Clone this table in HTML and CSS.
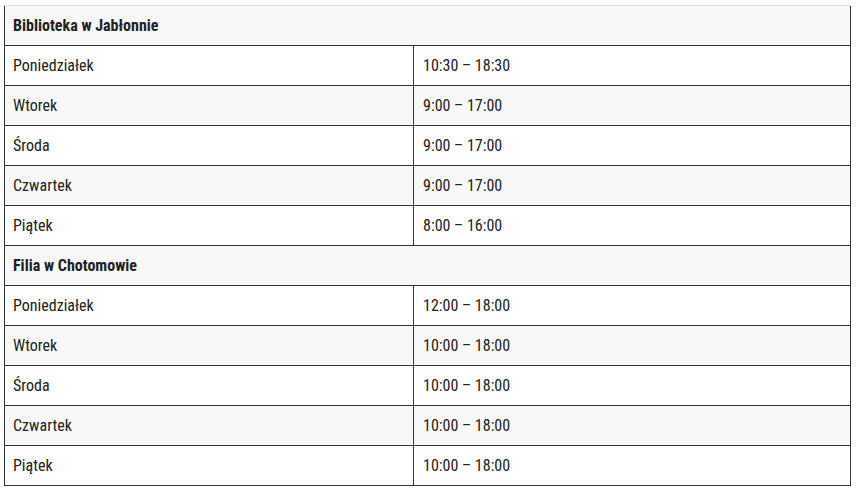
FILE: index.html
```
<!DOCTYPE html>
<html lang="pl">
<head>
<meta charset="utf-8">
<title>Godziny otwarcia</title>
<link rel="stylesheet" href="styles.css">
</head>
<body>
<div class="wrap">
<table class="hours">
<tbody>
<tr class="head"><th colspan="2">Biblioteka w Jabłonnie</th></tr>
<tr><td class="day">Poniedziałek</td><td>10:30 – 18:30</td></tr>
<tr><td class="day">Wtorek</td><td>9:00 – 17:00</td></tr>
<tr><td class="day">Środa</td><td>9:00 – 17:00</td></tr>
<tr><td class="day">Czwartek</td><td>9:00 – 17:00</td></tr>
<tr><td class="day">Piątek</td><td>8:00 – 16:00</td></tr>
<tr class="head"><th colspan="2">Filia w Chotomowie</th></tr>
<tr><td class="day">Poniedziałek</td><td>12:00 – 18:00</td></tr>
<tr><td class="day">Wtorek</td><td>10:00 – 18:00</td></tr>
<tr><td class="day">Środa</td><td>10:00 – 18:00</td></tr>
<tr><td class="day">Czwartek</td><td>10:00 – 18:00</td></tr>
<tr><td class="day">Piątek</td><td>10:00 – 18:00</td></tr>
</tbody>
</table>
</div>
</body>
</html>
```
FILE: styles.css
```
html, body {
  margin: 0;
  padding: 0;
  background: #fff;
}
.wrap {
  padding: 5px 7px 0 4px;
}
.hours {
  width: 847px;
  border-collapse: collapse;
  font-family: "Roboto Condensed", Roboto, "Liberation Sans", sans-serif;
  font-stretch: condensed;
  font-size: 16px;
  line-height: 20px;
  color: #222;
  border-left: 1px solid #333;
  border-right: 1px solid #333;
  border-bottom: 1px solid #333;
}
.hours tr {
  height: 40px;
}
.hours tr:nth-child(odd) {
  background: #f8f8f8;
}
.hours tr:first-child th {
  border-top: 1px solid #e0e0e0;
}
.hours th,
.hours td {
  padding: 1px 8px 0;
  text-align: left;
  vertical-align: middle;
  border-top: 1px solid #333;
  box-sizing: border-box;
}
.hours th {
  font-weight: 700;
}
.hours td.day {
  width: 409px;
  border-right: 1px solid #333;
}
.hours td + td {
  padding-left: 9px;
}
```
